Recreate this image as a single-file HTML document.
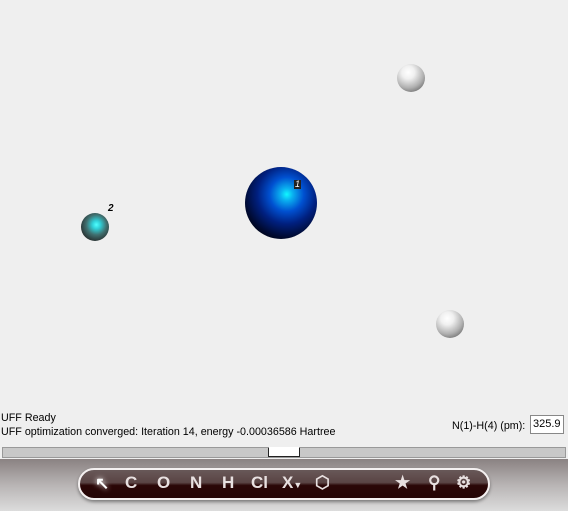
<!DOCTYPE html>
<html><head><style>
body{margin:0;width:568px;height:511px;background:#efefef;position:relative;overflow:hidden;font-family:"Liberation Sans",sans-serif}
.a{position:absolute;border-radius:50%}
.t{position:absolute;font-size:11px;color:#000;transform-origin:0 0;transform:scaleX(0.975)}
.ic{position:absolute;top:473px;color:#e8e0e0;font-size:17px;font-weight:bold}
.h{background:radial-gradient(circle at 40% 30%,#fff 0,#f0f0f0 25%,#b0b0b0 60%,#606060 90%,#404040 100%)}
</style></head><body>
<div class="a" style="left:245px;top:167px;width:72px;height:72px;background:radial-gradient(circle at 58% 38%,#10f8ff 0,#0ab0f0 10%,#0050d0 28%,#002080 48%,#000a30 70%,#000 88%)"></div>
<div style="position:absolute;left:294px;top:180px;font-size:9px;font-style:italic;color:#fff;background:#222;padding:0 1px;line-height:9px">1</div>
<div class="a" style="left:81px;top:213px;width:28px;height:28px;background:radial-gradient(circle at 55% 42%,#50ffff 0,#30d0d8 18%,#407070 45%,#283030 75%,#101010 100%)"></div>
<div style="position:absolute;left:108px;top:203px;font-size:10px;font-style:italic;font-weight:bold;color:#000;text-shadow:1px 0 #fff">2</div>
<div class="a h" style="left:397px;top:64px;width:28px;height:28px"></div>
<div class="a h" style="left:436px;top:310px;width:28px;height:28px"></div>
<div class="t" style="left:1px;top:412px">UFF Ready</div>
<div class="t" style="left:1px;top:426px">UFF optimization converged: Iteration 14, energy -0.00036586 Hartree</div>
<div class="t" style="left:452px;top:420px">N(1)-H(4) (pm):</div>
<div style="position:absolute;left:530px;top:415px;font-size:11px;line-height:17px;padding-left:2px;box-sizing:border-box;width:34px;height:19px;border:1px solid #888;background:#fff">325.9</div>
<div style="position:absolute;left:2px;top:447px;width:562px;height:9px;background:#c8c8c8;border:1px solid #999"></div>
<div style="position:absolute;left:268px;top:447px;width:30px;height:8px;background:#fff;border:1px solid #222;border-top-color:#fff"></div>
<div style="position:absolute;left:0;top:459px;width:568px;height:52px;background:linear-gradient(#8a8282,#b8b4b4 50%,#dcdcdc)"></div>
<div style="position:absolute;left:78px;top:468px;width:408px;height:28px;border:2px solid #f4f0f0;border-radius:16px;background:linear-gradient(#685858 0,#5a4444 45%,#2a0606 55%,#250505 100%);box-shadow:0 2px 3px rgba(0,0,0,.4)"></div>
<div class="ic" style="left:95px;top:474px;color:#fff;text-shadow:0 0 6px #fff">&#x2196;</div>
<div class="ic" style="left:125px">C</div>
<div class="ic" style="left:157px">O</div>
<div class="ic" style="left:190px">N</div>
<div class="ic" style="left:222px">H</div>
<div class="ic" style="left:251px">Cl</div>
<div class="ic" style="left:282px">X<span style="font-size:9px">▼</span></div>
<div class="ic" style="left:315px">⬡</div>
<div class="ic" style="left:395px">★</div>
<div class="ic" style="left:428px">⚲</div>
<div class="ic" style="left:456px">⚙</div>
</body></html>
